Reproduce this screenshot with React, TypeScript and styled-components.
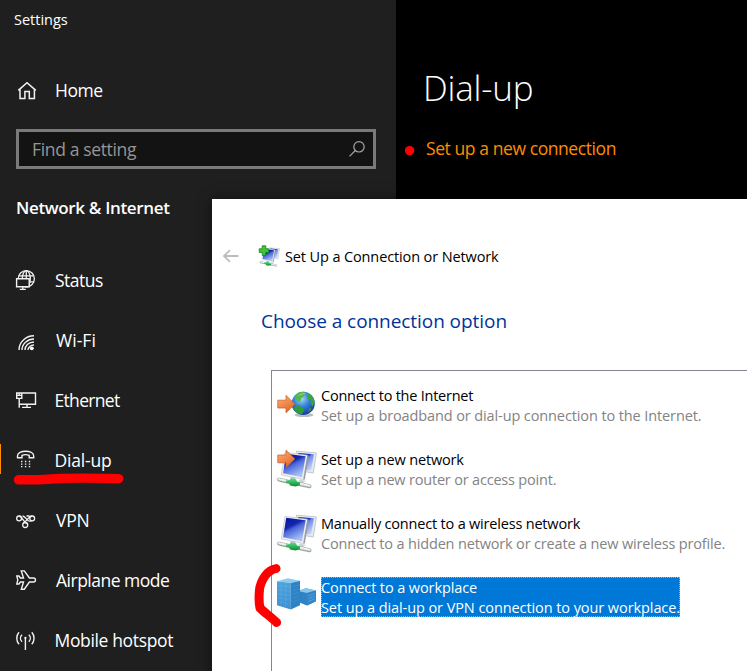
import React from 'react';
import styled, { createGlobalStyle } from 'styled-components';

const GlobalStyle = createGlobalStyle`
  * { box-sizing: border-box; }
  body { margin: 0; background: #000; }
`;

const Screen = styled.div`
  position: relative;
  display: flex;
  width: 747px;
  height: 671px;
  overflow: hidden;
  background: #000;
  font-family: "Open Sans", "Noto Sans", sans-serif;
`;

const Sidebar = styled.aside`
  display: flex;
  flex-direction: column;
  flex: 0 0 396px;
  background: #1f1f1f;
  color: #fff;
`;

const Text = styled.span<{ $ls?: number; $shift?: number }>`
  white-space: nowrap;
  letter-spacing: ${p => p.$ls ?? 0}px;
  margin-left: ${p => p.$shift ?? 0}px;
`;

const AppTitle = styled.div`
  padding: 10px 0 0 14px;
  height: 60px;
  font-size: 14.5px;
  line-height: 20px;
`;

const NavRow = styled.a<{ $active?: boolean }>`
  position: relative;
  display: flex;
  align-items: center;
  flex: 0 0 60px;
  padding-left: 14px;
  gap: 17px;
  font-size: 17.5px;
  line-height: 24px;
  color: #fff;

  &::before {
    content: "";
    display: ${p => (p.$active ? 'block' : 'none')};
    position: absolute;
    left: 0;
    top: 14px;
    width: 1px;
    height: 30px;
    background: #ff8c00;
  }
`;

const NavIcon = styled.svg`
  flex: none;
  width: 24px;
  height: 24px;
  fill: none;
  stroke: #f2f2f2;
  stroke-width: 1.3;
`;

const SearchBox = styled.div`
  display: flex;
  align-items: center;
  justify-content: space-between;
  width: 360px;
  height: 40px;
  margin: 9px 0 0 16px;
  padding: 0 7px 0 13px;
  border: 3px solid #7a7a7a;
  background: #131313;
  color: #969696;
  font-size: 17.5px;
  line-height: 24px;
`;

const SearchIcon = styled.svg`
  width: 18px;
  height: 18px;
  fill: none;
  stroke: #a6a6a6;
  stroke-width: 1.2;
`;

const SectionTitle = styled.h2`
  margin: 27px 0 0 16px;
  height: 54px;
  font-size: 17px;
  font-weight: 600;
  line-height: 24px;
`;

const Content = styled.main`
  flex: 1;
  padding: 63px 0 0 30px;
  color: #fff;
`;

const PageTitle = styled.h1`
  margin: 0 0 0 -3px;
  font-size: 35px;
  font-weight: 300;
  line-height: 50px;
`;

const SetupLink = styled.a`
  display: block;
  margin-top: 23px;
  font-size: 17.5px;
  line-height: 24px;
  color: #ff8c00;
`;

const Wizard = styled.section`
  position: absolute;
  left: 212px;
  top: 199px;
  width: 560px;
  height: 500px;
  background: #fff;
  box-shadow: 0 0 12px rgba(0, 0, 0, 0.55);
  color: #000;
`;

const WizardHeader = styled.header`
  display: flex;
  align-items: center;
  height: 24px;
  margin: 45px 0 0 10px;
  font-size: 14.5px;
  line-height: 22px;

  & > span { padding-top: 1px; }
`;

const BackArrow = styled.svg`
  width: 18px;
  height: 16px;
  margin-right: 18px;
  fill: none;
  stroke: #bdbdbd;
  stroke-width: 1.8;
`;

const HeaderIcon = styled.svg`
  width: 22px;
  height: 22px;
  margin-right: 5px;
`;

const WizardTitle = styled.h3`
  margin: 40px 0 0 49px;
  font-size: 19px;
  font-weight: 400;
  line-height: 26px;
  color: #003399;
`;

const OptionList = styled.div`
  display: flex;
  flex-direction: column;
  gap: 24px;
  height: 330px;
  margin: 36px 0 0 59px;
  padding: 14px 0 0 4px;
  border: 1px solid #828790;
`;

const Option = styled.div`
  display: flex;
  align-items: flex-start;
  height: 40px;
`;

const OptionIcon = styled.svg`
  flex: none;
  width: 42px;
  height: 40px;
  margin-right: 3px;
`;

const OptionText = styled.div<{ $selected?: boolean }>`
  display: flex;
  flex-direction: column;
  height: 40px;
  padding-top: 1px;
  width: ${p => (p.$selected ? '359px' : 'auto')};
  font-size: 14.5px;
  line-height: 20px;
  background: ${p => (p.$selected ? '#0078d7' : 'transparent')};
  color: ${p => (p.$selected ? '#fff' : '#000')};
  outline: ${p => (p.$selected ? '1px dotted #ff9a3c' : 'none')};
  outline-offset: -1px;
`;

const Description = styled(Text)<{ $selected?: boolean }>`
  color: ${p => (p.$selected ? '#fff' : '#838383')};
`;

const Markup = styled.svg`
  position: absolute;
  inset: 0;
  width: 747px;
  height: 671px;
  pointer-events: none;
  fill: none;
  stroke: #f00;
  stroke-linecap: round;
  stroke-linejoin: round;
`;

const navIcons: Record<string, React.ReactNode> = {
  home: <path d="M4.3 12.4 13 4.8l8.8 7.6M6 11v9.4h4.9v-7h4.4v7h5.1V11" strokeWidth="1.5" />,
  status: (
    <>
      <circle cx="12.3" cy="10.7" r="8.1" />
      <ellipse cx="12.3" cy="10.7" rx="4" ry="8.1" />
      <path d="M12.3 2.6v16M5 7.8h14.6M4.5 13.8h15.4" />
      <path d="M2.6 10.7h12.6v8H2.6z" fill="#1f1f1f" strokeWidth="1.4" />
      <path d="M8.8 18.7v2.7M5.8 21.4h6" />
    </>
  ),
  wifi: (
    <>
      <path d="M5 22A15 14.2 0 0 1 20 7.8M8 22a12 11 0 0 1 12-11M11 22a9 8 0 0 1 9-8M14 22a6 5 0 0 1 6-5" strokeWidth="1.4" />
      <circle cx="17.8" cy="20.3" r="1.9" fill="#fff" stroke="none" />
    </>
  ),
  ethernet: (
    <>
      <path d="M7.8 5h13.7v11.2H5.2M13 16.2v3M8 19.4h9M5.2 10.7v9M2.7 5h5.1v5.4H2.7zM2.7 7.4h5" strokeWidth="1.4" />
      <path d="M5.2 5v3" />
    </>
  ),
  dialup: (
    <>
      <path d="M3.5 9.8V8C3.5 1.7 19.7 1.7 19.7 8v1.8h-4.5V7.3c-2.4-.9-4.9-.9-7.2 0v2.5z" strokeWidth="1.4" />
      <path d="M7 13.5h1.4m2.5 0h1.4m2.5 0h1.4M7 16.1h1.4m2.5 0h1.4m2.5 0h1.4M7 18.7h1.4m2.5 0h1.4m2.5 0h1.4" />
    </>
  ),
  vpn: (
    <>
      <circle cx="5.1" cy="10.4" r="2.4" />
      <circle cx="18.2" cy="10.4" r="2.4" />
      <circle cx="11.2" cy="17" r="2.5" />
      <path d="M5.1 8c3 0 4.1 6.2 8.4 8M18.2 8c-3.8 0-4.6 4.8-9 7M8.5 8c2 0 4.1 3.4 5.8 4.7 1.1.7 2 .4 3.9.1M12.5 8h3" />
    </>
  ),
  airplane: (
    <path
      d="M7.3 2.9h3L15.4 10h4.1c2.6 0 2.6 4 0 4h-4.1l-5.1 7.2h-3L9.5 14H6.4L5 16H2.8l1-4-1-4H5l1.4 2h3.1z"
      strokeWidth="1.4"
    />
  ),
  hotspot: (
    <>
      <path d="M5 4.2c-3 3.4-3 8.6 0 12M17.8 4.2c3 3.4 3 8.6 0 12M8 6.7c-2 2-2 5 0 7M14.8 6.7c2 2 2 5 0 7M11.4 10v12" strokeWidth="1.4" />
      <circle cx="11.4" cy="9.8" r="1.1" fill="#fff" stroke="none" />
    </>
  ),
};

const navItems = [
  { id: 'status', label: 'Status', ls: -0.5, shift: 0 },
  { id: 'wifi', label: 'Wi-Fi', ls: 0.05, shift: 1 },
  { id: 'ethernet', label: 'Ethernet', ls: -0.68, shift: -0.5 },
  { id: 'dialup', label: 'Dial-up', ls: -0.2, shift: -0.5 },
  { id: 'vpn', label: 'VPN', ls: -0.2, shift: 1 },
  { id: 'airplane', label: 'Airplane mode', ls: -0.5, shift: 1 },
  { id: 'hotspot', label: 'Mobile hotspot', ls: -0.35, shift: -0.5 },
];

const Defs = () => (
  <defs>
    <linearGradient id="arrow" x1="0" y1="0" x2="0.6" y2="1">
      <stop offset="0" stopColor="#fdb98a" />
      <stop offset="0.5" stopColor="#f58b4c" />
      <stop offset="1" stopColor="#e0692c" />
    </linearGradient>
    <radialGradient id="ocean" cx="0.42" cy="0.3" r="0.72">
      <stop offset="0" stopColor="#a5dcf7" />
      <stop offset="0.45" stopColor="#3b86d6" />
      <stop offset="1" stopColor="#123a9c" />
    </radialGradient>
    <linearGradient id="screen" x1="0" y1="0" x2="0.9" y2="1">
      <stop offset="0" stopColor="#0a1fa8" />
      <stop offset="0.42" stopColor="#1b35c4" />
      <stop offset="0.5" stopColor="#6f8be6" />
      <stop offset="1" stopColor="#dbe6ff" />
    </linearGradient>
    <linearGradient id="screenFront" x1="0" y1="0" x2="0.5" y2="1">
      <stop offset="0" stopColor="#0512a0" />
      <stop offset="0.42" stopColor="#1426ae" />
      <stop offset="0.55" stopColor="#4a66d8" />
      <stop offset="1" stopColor="#a9c0f8" />
    </linearGradient>
    <linearGradient id="plug" x1="0" y1="0" x2="0" y2="1">
      <stop offset="0" stopColor="#5fe08a" />
      <stop offset="1" stopColor="#078a35" />
    </linearGradient>
    <linearGradient id="tower" x1="0" y1="0" x2="0" y2="1">
      <stop offset="0" stopColor="#4fa3dc" />
      <stop offset="1" stopColor="#3a90d2" />
    </linearGradient>
  </defs>
);

const Arrow = ({ y }: { y: number }) => (
  <path
    transform={`translate(0 ${y})`}
    d="M1.8 5.2h8.2V.4l8.8 8.700-8.800 8.700v-4.800H1.800z"
    fill="url(#arrow)"
    stroke="#c4662f"
    strokeWidth="0.8"
    strokeLinejoin="round"
  />
);

const GlobeArt = () => (
  <>
    <ellipse cx="28" cy="30" rx="9.5" ry="2" fill="#b9bcc2" />
    <circle cx="27.2" cy="18.4" r="11.6" fill="url(#ocean)" />
    <path d="M19 10.2c2.6-2.8 6.8-3.9 10.2-3.2l-1.8 2.2 1.6 1.4-3.6 2.6-1.2 3.2-2.8.2-1.4-2.2z" fill="#57b849" />
    <path d="M33 8.4c3.400 1.800 5.400 5 5.700 9l-2.200 4-1.800-2.800.4-3.200-2.900-1.400-1.200-2.600z" fill="#3aa53a" />
    <path d="M18.6 21.8l4.600-.8 4 2 .8 2.800-2.200 3.800c-3.800-.5-6.800-2.800-8.600-6z" fill="#2f9c39" />
    <path d="M33 23.6l2.4-.6-.8 2.6-2.4 1.6z" fill="#2f9c39" />
    <path d="M21 11.6c2.4-2.7 6-3.9 9.4-3.2-4 .4-7.4 1.6-9.4 3.2z" fill="#fff" opacity="0.5" />
    <Arrow y={10} />
  </>
);

const MonitorsArt = () => (
  <>
    <path d="M20.6 2.2 40.4 3.9 37.3 24 19 21z" fill="#e9ebef" stroke="#a3a7ae" strokeWidth="0.6" />
    <path d="M22.2 3.9 38 5.2 35.2 21.8 20.6 19.5z" fill="url(#screen)" />
    <path d="M9 3.3 31.6 6.2 27.4 30.6 5.4 25.8z" fill="#f0f1f4" stroke="#b4b8c0" strokeWidth="0.6" />
    <path d="M10.2 4.7 29.6 7.2 26 28.2 7.1 24.3z" fill="url(#screenFront)" />
    <path d="M31.4 6.4 32.8 7 28.8 30.4 27.4 30.6z" fill="#9599a2" />
    <path d="M14.5 28h5l-.6 4h-5z" fill="#c2c6cb" />
    <path d="M24 30.5l6 1.6-3.5 2.3-5-.6z" fill="#cfd2d6" />
    <path d="M3.2 30.6l9 2.1M23.5 35l10 2.2" stroke="#9aa79c" strokeWidth="4" strokeLinecap="round" />
    <path d="M3.2 30.2l9 2.1M23.5 34.6l10 2.2" stroke="#eef2ee" strokeWidth="2.2" strokeLinecap="round" />
    <path d="M10 31.4l3.4-.4 2-1.8 4.6 1 1 2.4 3.2 1-.4 2.6-4.2 1.4-5.6-1.2-1.2-2.2-3-.8z" fill="url(#plug)" />
  </>
);

const WorkplaceArt = () => (
  <>
    <path d="M22 14 30 11.2l10 2.3v10.8L31 28.6 22 25z" fill="#2f82c4" />
    <path d="M22 14 30 11.2l10 2.3-9 2.6z" fill="#8cc7ec" />
    <path d="M31 16.1l9-2.6v10.8l-9 4.3z" fill="#3387c9" />
    <path d="M32.5 18.7l6-1.8M32.5 21.5l6-2M32.5 24.3l6-2.3" stroke="#5ca9de" strokeWidth="0.7" />
    <path d="M1 4.2 11.8 1.3 24 3.8 14.8 6z" fill="#8fcdf0" />
    <path d="M1 4.2 14.8 6v26.6L1 28.2z" fill="url(#tower)" />
    <path d="M14.8 6 24 3.8v24.4l-9.2 4.4z" fill="#2e82c6" />
    <path
      d="M2 8.3l11.8 1.8M2 12.4l11.8 2M2 16.5l11.8 2.2M2 20.6 13.8 23M2 24.7l11.8 2.8M5 5v24.2M9.5 5.6v25"
      stroke="#8ac6ee"
      strokeWidth="0.5"
      opacity="0.4"
    />
    <path d="M16 9.7l7-1.600M16 13.500l7-1.800M16 17.300l7-2M16 21.100l7-2.300M16 25l7-2.500" stroke="#5aa5da" strokeWidth="0.6" opacity="0.5" />
  </>
);

const options = [
  {
    title: 'Connect to the Internet', titleLs: -0.24,
    text: 'Set up a broadband or dial-up connection to the Internet.', textLs: -0.11,
    art: <GlobeArt />,
  },
  {
    title: 'Set up a new network', titleLs: -0.17,
    text: 'Set up a new router or access point.', textLs: -0.19,
    art: <><MonitorsArt /><Arrow y={0.8} /></>,
  },
  {
    title: 'Manually connect to a wireless network', titleLs: -0.19,
    text: 'Connect to a hidden network or create a new wireless profile.', textLs: -0.165,
    art: <MonitorsArt />,
  },
  {
    title: 'Connect to a workplace', titleLs: -0.1,
    text: 'Set up a dial-up or VPN connection to your workplace.', textLs: -0.08,
    art: <WorkplaceArt />, selected: true,
  },
];

export default function App() {
  return (
    <Screen>
      <GlobalStyle />
      <Sidebar>
        <AppTitle><Text>Settings</Text></AppTitle>
        <NavRow>
          <NavIcon viewBox="0 0 24 24">{navIcons.home}</NavIcon>
          <Text $ls={-0.45}>Home</Text>
        </NavRow>
        <SearchBox>
          <Text $ls={-0.35}>Find a setting</Text>
          <SearchIcon viewBox="0 0 18 18">
            <circle cx="11" cy="6.8" r="5.2" />
            <path d="M7.3 10.5 1.5 16.3" />
          </SearchIcon>
        </SearchBox>
        <SectionTitle><Text $ls={-0.34}>Network &amp; Internet</Text></SectionTitle>
        {navItems.map(item => (
          <NavRow key={item.id} $active={item.id === 'dialup'}>
            <NavIcon viewBox="0 0 24 24">{navIcons[item.id]}</NavIcon>
            <Text $ls={item.ls} $shift={item.shift}>{item.label}</Text>
          </NavRow>
        ))}
      </Sidebar>
      <Content>
        <PageTitle><Text $ls={-0.2}>Dial-up</Text></PageTitle>
        <SetupLink><Text $ls={-0.42}>Set up a new connection</Text></SetupLink>
      </Content>
      <Wizard>
        <WizardHeader>
          <BackArrow viewBox="0 0 18 16"><path d="M2 8h14.5M8 2.2 2 8l6 5.8" /></BackArrow>
          <HeaderIcon viewBox="0 0 22 22">
            <Defs />
            <g transform="translate(1 1.6) scale(0.51)"><MonitorsArt /></g>
            <path d="M4.2.8h3.6v3h3v3.6h-3v3H4.2v-3h-3V3.8h3z" fill="#3fc43c" stroke="#16831c" strokeWidth="0.8" />
          </HeaderIcon>
          <Text $ls={-0.12}>Set Up a Connection or Network</Text>
        </WizardHeader>
        <WizardTitle><Text $ls={-0.06}>Choose a connection option</Text></WizardTitle>
        <OptionList>
          {options.map(o => (
            <Option key={o.title}>
              <OptionIcon viewBox="0 0 42 40">{o.art}</OptionIcon>
              <OptionText $selected={o.selected}>
                <Text $ls={o.titleLs}>{o.title}</Text>
                <Description $ls={o.textLs} $selected={o.selected}>{o.text}</Description>
              </OptionText>
            </Option>
          ))}
        </OptionList>
      </Wizard>
      <Markup viewBox="0 0 747 671">
        <path d="M18.5 479.8c11-.2 24 .4 33-.8 12-1.400 46-.8 67.200-.4" strokeWidth="9.4" />
        <path d="M276 568.6c-8 1-15.500 11-16.600 22-.6 7-.4 13 .6 17.400 4.500 4.500 11 9 16.600 14.400" strokeWidth="9" />
        <circle cx="409.6" cy="150.6" r="4.7" fill="#f00" stroke="none" />
      </Markup>
    </Screen>
  );
}
